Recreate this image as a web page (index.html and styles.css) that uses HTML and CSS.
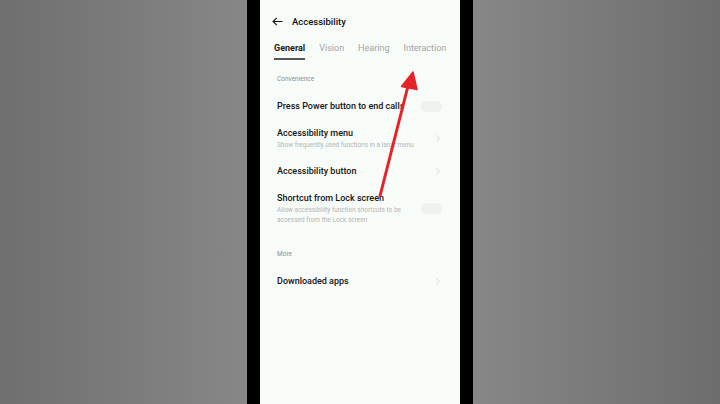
FILE: index.html
```html
<!doctype html>
<html lang="en">
<head>
    <meta charset="UTF-8">
    <title>Accessibility</title>
    <link rel="stylesheet" href="styles.css">
</head>
<body>
    <div class="stage">
        <div class="side sideLeft"></div>
        <div class="phone">
            <div class="topbar">
                <svg class="back" width="11" height="9" viewBox="0 0 11 9"><path d="M10.5 4.5H1M4.8 0.8L1 4.5l3.8 3.7" fill="none" stroke="#111" stroke-width="1.1"/></svg>
                <span class="title">Accessibility</span>
            </div>
            <div class="tabs">
                <span class="tab active">General</span>
                <span class="tab">Vision</span>
                <span class="tab">Hearing</span>
                <span class="tab">Interaction</span>
            </div>

            <div class="section">Convenience</div>
            <div class="row">
                <div class="rowText"><div class="rowTitle">Press Power button to end calls</div></div>
                <span class="toggle"></span>
            </div>
            <div class="row rowSub">
                <div class="rowText">
                    <div class="rowTitle">Accessibility menu</div>
                    <div class="rowDesc">Show frequently used functions in a large menu</div>
                </div>
                <span class="chev"></span>
            </div>
            <div class="row">
                <div class="rowText"><div class="rowTitle">Accessibility button</div></div>
                <span class="chev"></span>
            </div>
            <div class="row rowSub">
                <div class="rowText">
                    <div class="rowTitle">Shortcut from Lock screen</div>
                    <div class="rowDesc">Allow accessibility function shortcuts to be<br>accessed from the Lock screen</div>
                </div>
                <span class="toggle"></span>
            </div>

            <div class="section more">More</div>
            <div class="row">
                <div class="rowText"><div class="rowTitle">Downloaded apps</div></div>
                <span class="chev"></span>
            </div>

            <svg class="pointer" width="200" height="404" viewBox="0 0 200 404">
                <path d="M120 196L148 86" stroke="#e4232a" stroke-width="3" stroke-linecap="round"/>
                <path d="M153 72L141.5 86.5L157 89.5Z" fill="#e4232a" stroke="#e4232a" stroke-width="1.5" stroke-linejoin="round"/>
            </svg>
        </div>
        <div class="side sideRight"></div>
    </div>
</body>
</html>
```

FILE: styles.css
```css
*{
    margin: 0;
    padding: 0;
    box-sizing: border-box;
}
body{
    width: 720px;height: 404px;overflow: hidden;
    font-family: Roboto, "Noto Sans", sans-serif;
    background: #000;
}
.stage{
    display: flex;height: 404px;
}
.side{
    flex: 1;
}
.sideLeft{
    background: linear-gradient(to right, #6f6f6f, #878787);
}
.sideRight{
    background: linear-gradient(to right, #878787, #6d6d6d);
}
.phone{
    width: 226px;height: 404px;
    border-left: 13px solid #000;border-right: 13px solid #000;
    background: #f8fcf8;
    position: relative;
}
.topbar{
    height: 42px;display: flex;align-items: center;padding-left: 12px;
}
.back{
    display: block;margin-right: 9px;
}
.title{
    font-size: 9.5px;color: #111;font-weight: 500;
}
.tabs{
    display: flex;gap: 14px;padding-left: 14px;height: 18px;
}
.tab{
    font-size: 9px;line-height: 12px;color: #a3a3a3;height: 18px;
}
.tab.active{
    color: #1a1a1a;font-weight: 700;
    border-bottom: 2px solid #555;
}
.section{
    font-size: 6.5px;line-height: 8px;color: #8c8c8c;
    padding: 15px 17px 9px;
}
.section.more{
    padding-top: 18px;
}
.row{
    display: flex;align-items: center;justify-content: space-between;
    padding: 8px 18px 8px 17px;
}
.rowSub{
    padding-top: 7px;padding-bottom: 7px;
}
.rowTitle{
    font-size: 9px;line-height: 12px;color: #141414;font-weight: 500;
}
.rowDesc{
    font-size: 6.5px;line-height: 10px;color: #b4b4b4;margin-top: 1px;
}
.toggle{
    width: 21px;height: 11px;border-radius: 6px;background: #eef1ee;
}
.chev{
    width: 5px;height: 5px;margin-right: 3px;
    border-top: 1px solid #e0e2e0;border-right: 1px solid #e0e2e0;
    transform: rotate(45deg);
}
.pointer{
    position: absolute;left: 0;top: 0;
}
```
